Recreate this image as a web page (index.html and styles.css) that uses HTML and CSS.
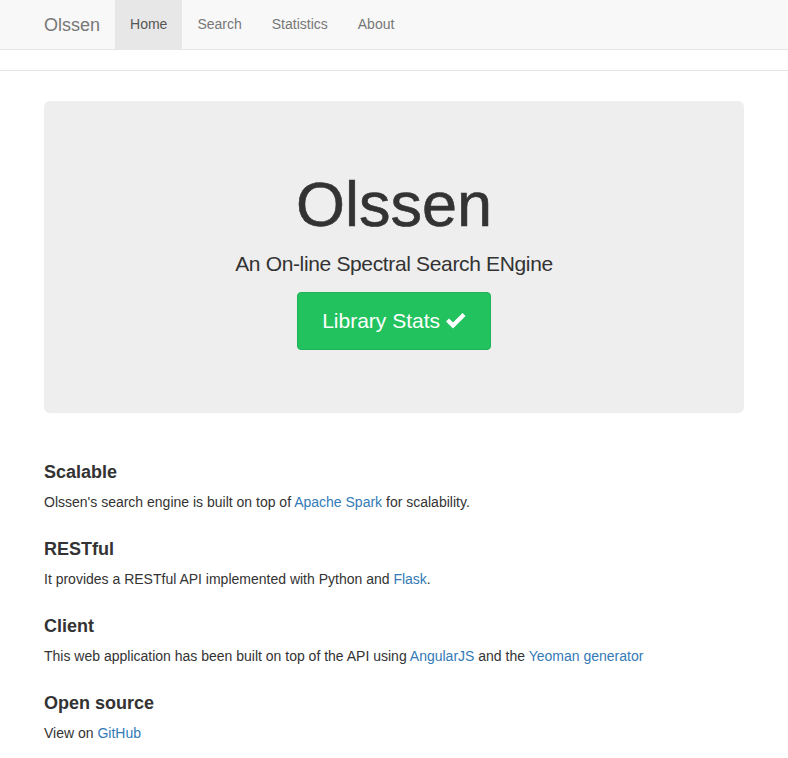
FILE: index.html
```html
<!DOCTYPE html>
<html>
<head>
<meta charset="utf-8">
<title>Olssen</title>
<link rel="stylesheet" href="styles.css">
</head>
<body>
<nav class="navbar">
  <div class="container nav-inner">
    <a class="brand" href="#">Olssen</a>
    <ul class="nav">
      <li class="active"><a href="#">Home</a></li>
      <li><a href="#">Search</a></li>
      <li><a href="#">Statistics</a></li>
      <li><a href="#">About</a></li>
    </ul>
  </div>
</nav>
<div class="header"></div>
<div class="container">
  <div class="jumbotron">
    <h1>Olssen</h1>
    <p class="lead">An On-line Spectral Search ENgine</p>
    <p class="btn-wrap"><a class="btn" href="#">Library Stats <svg class="check" viewBox="0 0 20 16" width="20" height="16"><polygon points="0,8.6 3,5.6 7,9.6 16.6,0 19.6,3 7,15.6" fill="#fff"/></svg></a></p>
  </div>
  <div class="marketing">
    <h4>Scalable</h4>
    <p>Olssen's search engine is built on top of <a href="#">Apache Spark</a> for scalability.</p>
    <h4>RESTful</h4>
    <p>It provides a RESTful API implemented with Python and <a href="#">Flask</a>.</p>
    <h4>Client</h4>
    <p>This web application has been built on top of the API using <a href="#">AngularJS</a> and the <a href="#">Yeoman generator</a></p>
    <h4>Open source</h4>
    <p>View on <a href="#">GitHub</a></p>
  </div>
</div>
</body>
</html>
```
FILE: styles.css
```css
* { box-sizing: border-box; }
html, body { margin: 0; padding: 0; }
body {
  font-family: "Liberation Sans", Arial, sans-serif;
  font-size: 14px;
  line-height: 1.42857;
  color: #333;
  background: #fff;
}
a { color: #337ab7; text-decoration: none; }
.container {
  width: 730px;
  margin: 0 auto;
  padding: 0 15px;
}
.navbar {
  background: #f8f8f8;
  border-bottom: 1px solid #e7e7e7;
  margin-bottom: 20px;
}
.nav-inner {
  display: flex;
  height: 49px;
}
.brand {
  display: block;
  margin-left: -15px;
  padding: 15px;
  font-size: 18px;
  line-height: 20px;
  color: #777;
}
.nav {
  display: flex;
  list-style: none;
  margin: 0;
  padding: 0;
}
.nav li a {
  display: block;
  padding: 15px;
  line-height: 19px;
  color: #777;
}
.nav li.active a {
  background: #e7e7e7;
  color: #555;
}
.header {
  border-bottom: 1px solid #e5e5e5;
  margin-bottom: 30px;
}
.jumbotron {
  background: #eee;
  border-radius: 6px;
  padding: 48px 60px;
  text-align: center;
  margin-bottom: 30px;
}
.jumbotron h1 {
  font-size: 63px;
  font-weight: normal;
  line-height: 1.1;
  margin: 21px 0 10px;
  color: #333;
  -webkit-text-stroke: 0.6px #333;
}
.jumbotron p {
  font-size: 21px;
  line-height: 30px;
  margin: 0 0 15px;
}
.jumbotron .lead {
  font-weight: 300;
  margin-bottom: 13px;
  letter-spacing: -0.35px;
}
.btn {
  display: inline-block;
  vertical-align: middle;
  font-size: 21px;
  line-height: 28px;
  padding: 14px 24px;
  color: #fff;
  background: #22c35e;
  border: 1px solid #1db356;
  border-radius: 4px;
}
.check {
  vertical-align: -1px;
}
.marketing {
  margin: 40px 0;
  padding-top: 0.1px;
}
.marketing h4 {
  font-size: 18px;
  font-weight: bold;
  line-height: 1.1;
  margin: 10px 0;
}
.marketing p {
  margin: 0 0 10px;
}
.marketing p + h4 {
  margin-top: 27px;
}
```
